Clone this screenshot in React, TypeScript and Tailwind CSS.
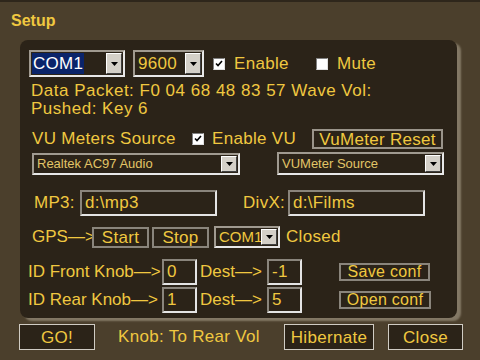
import React from 'react';

const font = "font-['Liberation_Sans',Arial,sans-serif]";

const Arrow: React.FC = () => (
  <div className="w-[16px] shrink-0 self-stretch bg-[#d4d0c8] border border-t-white border-l-white border-r-[#404040] border-b-[#404040] flex items-center justify-center">
    <svg width="7" height="4" viewBox="0 0 7 4">
      <path d="M0 0h7L3.5 4z" fill="#000" />
    </svg>
  </div>
);

const Select: React.FC<{ value: string; w: string; h: string; text?: string; selected?: boolean }> = ({ value, w, h, text, selected }) => (
  <div className={`${w} ${h} flex items-stretch bg-[#2b2318] border-2 border-t-[#a09a90] border-l-[#a09a90] border-r-[#e8e8e8] border-b-[#e8e8e8] p-[1px]`}>
    <div className="flex-1 flex items-center min-w-0 overflow-hidden whitespace-nowrap">
      {selected ? (
        <span className="bg-[#0a246a] text-white px-[1px] h-full flex items-center text-[17px]">{value}</span>
      ) : (
        <span className={`pl-[2px] ${text ?? 'text-[17px]'}`}>{value}</span>
      )}
    </div>
    <Arrow />
  </div>
);

const Input: React.FC<{ value: string; w: string }> = ({ value, w }) => (
  <div className={`${w} h-[26px] flex items-center pl-[3px] text-[17px] bg-[#2b2318] border-2 border-t-[#8a857c] border-l-[#8a857c] border-r-[#e4e4e4] border-b-[#e4e4e4]`}>
    {value}
  </div>
);

const Check: React.FC<{ checked?: boolean }> = ({ checked }) => (
  <div className="w-[12px] h-[12px] shrink-0 bg-white border border-t-[#808080] border-l-[#808080] border-r-[#e0e0e0] border-b-[#e0e0e0] flex items-center justify-center">
    {checked && (
      <svg width="8" height="8" viewBox="0 0 8 8">
        <path d="M1 3.5l2 2 4-4.5" stroke="#000" strokeWidth="1.6" fill="none" />
      </svg>
    )}
  </div>
);

const Btn: React.FC<{ label: string; w: string; h: string; cls?: string }> = ({ label, w, h, cls }) => (
  <div className={`${w} ${h} flex items-center justify-center whitespace-nowrap bg-[#2b2318] border leading-none ${cls ?? ''}`}>
    {label}
  </div>
);

export default function App() {
  return (
    <div className={`w-[480px] h-[360px] overflow-hidden bg-[#4b3f2c] text-[#f0c840] tracking-[0.3px] ${font} border-t-2 border-[#2e261b] flex flex-col`}>
      <div className="h-[38px] pl-[11px] pt-[7px] text-[16px] font-bold tracking-normal">Setup</div>

      <div className="ml-[20px] w-[437px] h-[278px] rounded-[8px] bg-[#2b2318] shadow-[4px_3px_2px_rgba(200,190,170,0.45)] flex flex-col text-[17px]">
        <div className="mt-[10px] pl-[9px] h-[27px] flex items-center">
          <Select value="COM1" w="w-[96px]" h="h-[27px]" selected />
          <div className="ml-[8px]"><Select value="9600" w="w-[71px]" h="h-[27px]" /></div>
          <div className="ml-[9px] w-[103px] flex items-center gap-[9px]">
            <Check checked />
            <span>Enable</span>
          </div>
          <div className="flex items-center gap-[9px]">
            <Check />
            <span>Mute</span>
          </div>
        </div>

        <div className="mt-[5px] pl-[11px] text-[17px] leading-[18px] tracking-[0.5px]">
          <div>Data Packet: F0 04 68 48 83 57 Wave Vol:</div>
          <div>Pushed: Key 6</div>
        </div>

        <div className="mt-[11px] pl-[12px] h-[20px] flex items-center">
          <span className="w-[160px]">VU Meters Source</span>
          <Check checked />
          <span className="ml-[8px] w-[100px]">Enable VU</span>
          <Btn label="VuMeter Reset" w="w-[131px]" h="h-[20px]" cls="border-2 border-[#9a948a]" />
        </div>

        <div className="mt-[3px] pl-[12px] flex items-center">
          <Select value="Realtek AC97 Audio" w="w-[208px]" h="h-[22px]" text="text-[13px] text-[#e2c567] tracking-normal" />
          <div className="ml-[37px]"><Select value="VUMeter Source" w="w-[167px]" h="h-[23px]" text="text-[13px] text-[#e2c567] tracking-normal" /></div>
        </div>

        <div className="mt-[15px] pl-[14px] h-[26px] flex items-center">
          <span className="w-[46px]">MP3:</span>
          <Input value="d:\mp3" w="w-[137px]" />
          <span className="ml-[26px] w-[45px]">DivX:</span>
          <Input value="d:\Films" w="w-[137px]" />
        </div>

        <div className="mt-[10px] pl-[12px] h-[22px] flex items-center">
          <span className="w-[60px] whitespace-nowrap tracking-normal">GPS—&gt;</span>
          <Btn label="Start" w="w-[57px]" h="h-[21px]" cls="border-2 border-[#8a857c]" />
          <Btn label="Stop" w="w-[57px]" h="h-[21px]" cls="ml-[3px] border-2 border-[#8a857c]" />
          <div className="ml-[5px]"><Select value="COM1" w="w-[66px]" h="h-[22px]" text="text-[15px] tracking-normal" /></div>
          <span className="ml-[6px]">Closed</span>
        </div>

        <div className="mt-[11px] pl-[8px] h-[26px] flex items-center">
          <span className="w-[134px] whitespace-nowrap tracking-normal">ID Front Knob—&gt;</span>
          <Input value="0" w="w-[35px]" />
          <span className="ml-[3px] w-[67px] whitespace-nowrap tracking-normal">Dest—&gt;</span>
          <Input value="-1" w="w-[35px]" />
          <Btn label="Save conf" w="w-[91px]" h="h-[18px]" cls="ml-[37px] text-[16px] border-2 border-[#8a857c]" />
        </div>

        <div className="mt-[2px] pl-[8px] h-[26px] flex items-center">
          <span className="w-[134px] whitespace-nowrap tracking-normal">ID Rear Knob—&gt;</span>
          <Input value="1" w="w-[35px]" />
          <span className="ml-[3px] w-[67px] whitespace-nowrap tracking-normal">Dest—&gt;</span>
          <Input value="5" w="w-[35px]" />
          <Btn label="Open conf" w="w-[92px]" h="h-[18px]" cls="ml-[37px] text-[16px] border-2 border-[#8a857c]" />
        </div>
      </div>

      <div className="mt-[6px] pl-[19px] h-[26px] flex items-center text-[17px]">
        <Btn label="GO!" w="w-[76px]" h="h-[26px]" cls="border-[#d0ccc4]" />
        <span className="ml-[23px] w-[166px]">Knob: To Rear Vol</span>
        <Btn label="Hibernate" w="w-[90px]" h="h-[26px]" cls="border-[#d0ccc4]" />
        <Btn label="Close" w="w-[75px]" h="h-[26px]" cls="ml-[14px] border-[#d0ccc4]" />
      </div>
    </div>
  );
}
